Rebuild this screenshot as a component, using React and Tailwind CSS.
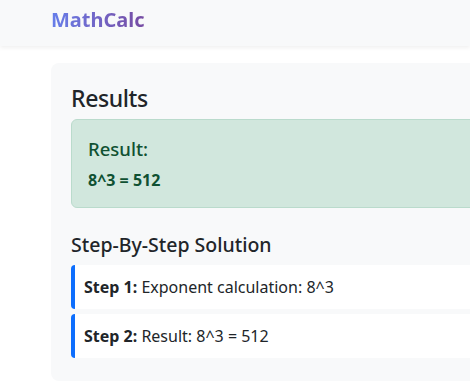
export default function App() {
  const font = { fontFamily: '"Noto Sans", "Open Sans", sans-serif' };
  return (
    <div className="w-[470px] h-[381px] overflow-hidden bg-white text-[#212529]" style={font}>
      <nav className="h-[46px] bg-[#f8f9fa] shadow-[0_2px_4px_rgba(0,0,0,0.06)] flex items-center pl-[51px] pb-[6px] relative z-10">
        <span className="text-[20px] font-bold bg-gradient-to-r from-[#667eea] to-[#764ba2] bg-clip-text text-transparent leading-none">
          MathCalc
        </span>
      </nav>
      <div className="pt-[17px] pl-[51px]">
        <div className="w-[520px] bg-[#f8f9fa] rounded-lg px-5 pt-5 pb-[23px]">
          <h2 className="text-[23px] leading-[30px] font-medium tracking-[-0.4px] mb-[6px]">Results</h2>
          <div className="bg-[#d1e7dd] border border-[#badbcc] text-[#0f5132] rounded-md p-4">
            <h4 className="text-[18.5px] leading-[26px] font-medium mb-2">Result:</h4>
            <p className="text-[16px] leading-[21px] font-bold">8^3 = 512</p>
          </div>
          <h4 className="text-[19.5px] leading-[26px] font-medium mt-6 mb-[7px]">Step-By-Step Solution</h4>
          <div className="flex flex-col gap-[5px]">
            <div className="bg-white border-l-4 border-[#0d6efd] rounded pl-[9px] py-[10px] text-[16px] leading-[24px]">
              <strong>Step 1:</strong> Exponent calculation: 8^3
            </div>
            <div className="bg-white border-l-4 border-[#0d6efd] rounded pl-[9px] py-[10px] text-[16px] leading-[24px]">
              <strong>Step 2:</strong> Result: 8^3 = 512
            </div>
          </div>
        </div>
      </div>
    </div>
  );
}
